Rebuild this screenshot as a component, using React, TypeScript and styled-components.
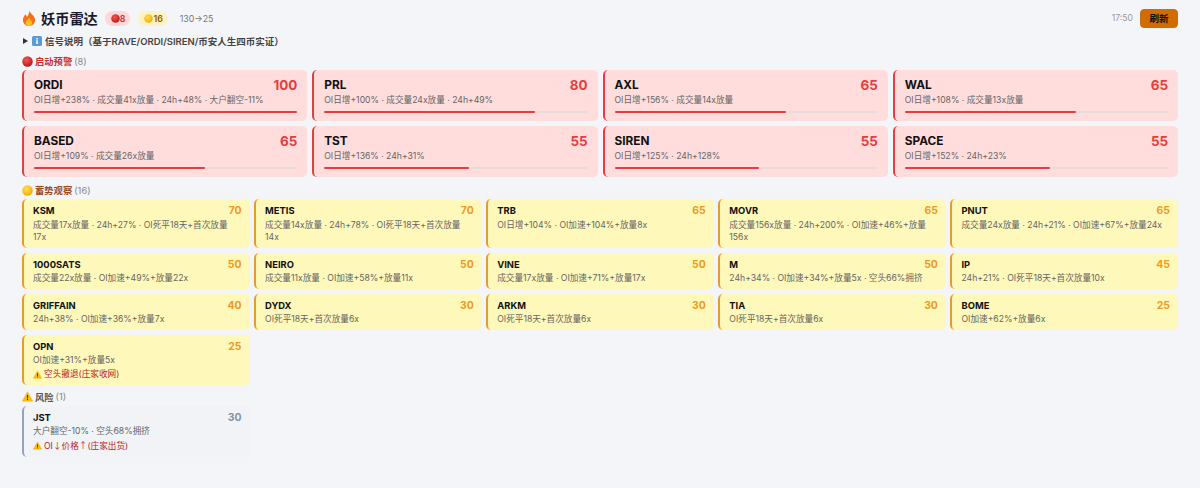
import styled, { createGlobalStyle } from "styled-components";

const GlobalStyle = createGlobalStyle`
  html, body {
    margin: 0;
    padding: 0;
    background: #f3f5f9;
    font-family: Inter, "Noto Sans CJK SC", sans-serif;
  }
  * { box-sizing: border-box; }
`;

const Page = styled.div`
  padding: 8px 22px 0;
  width: 1200px;
  height: 488px;
  overflow: hidden;
`;

const Header = styled.header`
  display: flex;
  align-items: center;
  justify-content: space-between;
  height: 20px;
`;

const HeaderSide = styled.div`
  display: flex;
  align-items: center;
`;

const Title = styled.h1`
  display: flex;
  align-items: center;
  gap: 5px;
  margin: 0 7px 0 0;
  font-size: 14.2px;
  font-weight: 700;
  color: #1a1a2e;
`;

const CountBadge = styled.span<{ $bg: string; $color: string }>`
  display: inline-flex;
  align-items: center;
  height: 15px;
  padding: 0 5px 0 6px;
  margin-right: 8px;
  border-radius: 8px;
  background: ${(p) => p.$bg};
  color: ${(p) => p.$color};
  font-size: 8.8px;
  font-weight: 600;
`;

const Flow = styled.span`
  margin-left: 4px;
  font-size: 8.8px;
  color: #777;
`;

const Clock = styled.span`
  margin-right: 7px;
  font-size: 8.6px;
  color: #999;
`;

const RefreshButton = styled.button`
  width: 38px;
  height: 19px;
  padding: 0;
  border: 1px solid #c9710f;
  border-radius: 4px;
  background: #d06c00;
  color: #111;
  font-family: inherit;
  font-size: 9.5px;
  font-weight: 600;
`;

const Explain = styled.div`
  display: flex;
  align-items: center;
  gap: 3px;
  margin-top: 5px;
  height: 16px;
  font-size: 9.5px;
  font-weight: 600;
  color: #444;
`;

const Arrow = styled.span`
  width: 0;
  height: 0;
  margin: 0 1px;
  border-left: 5px solid #333;
  border-top: 3px solid transparent;
  border-bottom: 3px solid transparent;
`;

const SectionLabel = styled.div<{ $color: string; $top: number }>`
  display: flex;
  align-items: center;
  gap: 2px;
  height: 12px;
  margin-top: ${(p) => p.$top}px;
  margin-bottom: 3px;
  font-size: 9.3px;
  font-weight: 600;
  color: ${(p) => p.$color};

  small {
    font-size: 9.3px;
    font-weight: 400;
    color: #888;
  }
`;

const Grid = styled.div<{ $cols: number; $rowGap: number; $colGap: number }>`
  display: grid;
  grid-template-columns: repeat(${(p) => p.$cols}, 1fr);
  gap: ${(p) => p.$rowGap}px ${(p) => p.$colGap}px;
`;

const BigCard = styled.div`
  height: 51px;
  padding: 8px 10px 0 10px;
  border-left: 2px solid #e53e3e;
  border-radius: 5px;
  background: #ffdddd;
`;

const SmallCard = styled.div<{ $risk?: boolean }>`
  padding: 6px 8px 4px 9px;
  border-left: 2px solid ${(p) => (p.$risk ? "#94a3b8" : "#ed9a1e")};
  border-radius: 5px;
  background: ${(p) => (p.$risk ? "#f1f3f6" : "#fff8bb")};
`;

const CardTop = styled.div`
  display: flex;
  justify-content: space-between;
  align-items: center;
`;

const BigName = styled.span`
  font-size: 11.8px;
  font-weight: 700;
  line-height: 14px;
  color: #111;
`;

const BigScore = styled.span`
  font-size: 13.4px;
  font-weight: 700;
  line-height: 14px;
  color: #e53e3e;
`;

const SmallName = styled.span`
  font-size: 9.4px;
  font-weight: 700;
  line-height: 12px;
  color: #111;
`;

const SmallScore = styled.span<{ $risk?: boolean }>`
  font-size: 10.4px;
  font-weight: 700;
  line-height: 12px;
  color: ${(p) => (p.$risk ? "#8492a6" : "#ed9a1e")};
`;

const Detail = styled.div<{ $big?: boolean }>`
  margin-top: ${(p) => (p.$big ? 1 : 1.5)}px;
  padding-right: 2px;
  font-size: 8.65px;
  line-height: ${(p) => (p.$big ? 14 : 12.5)}px;
  color: #666;
`;

const Warn = styled.div`
  display: flex;
  align-items: center;
  gap: 2px;
  margin-top: 1.5px;
  font-size: 8.65px;
  line-height: 12.5px;
  color: #b91c1c;
`;

const WideArrow = styled.span`
  font-family: "Noto Sans CJK SC", sans-serif;
`;

const Track = styled.div`
  height: 2px;
  margin-top: 4px;
  border-radius: 1px;
  background: #e6dcdc;
`;

const Fill = styled.div`
  height: 100%;
  border-radius: 1px;
  background: #e53e3e;
`;

function Dot({ color, shade, size = 10 }: { color: string; shade: string; size?: number }) {
  const id = `dot${color.slice(1)}`;
  return (
    <svg width={size} height={size} viewBox="0 0 20 20" style={{ flexShrink: 0 }}>
      <defs>
        <radialGradient id={id} cx="40%" cy="35%" r="70%">
          <stop offset="0%" stopColor={color} />
          <stop offset="100%" stopColor={shade} />
        </radialGradient>
      </defs>
      <circle cx="10" cy="10" r="9.5" fill={`url(#${id})`} />
    </svg>
  );
}

const RedDot = (p: { size?: number }) => <Dot color="#f25a4f" shade="#b5141c" {...p} />;
const YellowDot = (p: { size?: number }) => <Dot color="#ffe14d" shade="#f2a900" {...p} />;

function WarnIcon({ size = 9 }: { size?: number }) {
  return (
    <svg width={size} height={size} viewBox="0 0 20 20" style={{ flexShrink: 0 }}>
      <path d="M10 1.5 19.5 18.5H.5Z" fill="#f9b91a" stroke="#f9b91a" strokeLinejoin="round" />
      <rect x="9" y="7" width="2" height="6.5" fill="#3b3b3b" />
      <rect x="9" y="14.5" width="2" height="2" fill="#3b3b3b" />
    </svg>
  );
}

function Fire() {
  return (
    <svg width="14" height="16" viewBox="0 0 26 30">
      <path d="M13 0c1 6 9 9 11 16 2 8-4 14-11 14S0 24 2 16c1-4 3-5 4-8 2 2 3 3 3 5 3-3 5-8 4-13Z" fill="#f4701d" />
      <path d="M13 14c1 3 6 6 6 10 0 3-3 6-6 6s-6-3-6-6c0-4 5-6 6-10Z" fill="#fcc21b" />
    </svg>
  );
}

function InfoIcon() {
  return (
    <svg width="10" height="10" viewBox="0 0 20 20">
      <rect width="20" height="20" rx="3" fill="#5b9bd5" />
      <rect x="8.5" y="4" width="3" height="3" fill="#fff" />
      <rect x="8.5" y="8.5" width="3" height="7.5" fill="#fff" />
    </svg>
  );
}

const startCards = [
  ["ORDI", 100, "OI日增+238% · 成交量41x放量 · 24h+48% · 大户翻空-11%"],
  ["PRL", 80, "OI日增+100% · 成交量24x放量 · 24h+49%"],
  ["AXL", 65, "OI日增+156% · 成交量14x放量"],
  ["WAL", 65, "OI日增+108% · 成交量13x放量"],
  ["BASED", 65, "OI日增+109% · 成交量26x放量"],
  ["TST", 55, "OI日增+136% · 24h+31%"],
  ["SIREN", 55, "OI日增+125% · 24h+128%"],
  ["SPACE", 55, "OI日增+152% · 24h+23%"],
] as const;

const watchCards: [string, number, string, string?][] = [
  ["KSM", 70, "成交量17x放量 · 24h+27% · OI死平18天+首次放量17x"],
  ["METIS", 70, "成交量14x放量 · 24h+78% · OI死平18天+首次放量14x"],
  ["TRB", 65, "OI日增+104% · OI加速+104%+放量8x"],
  ["MOVR", 65, "成交量156x放量 · 24h+200% · OI加速+46%+放量156x"],
  ["PNUT", 65, "成交量24x放量 · 24h+21% · OI加速+67%+放量24x"],
  ["1000SATS", 50, "成交量22x放量 · OI加速+49%+放量22x"],
  ["NEIRO", 50, "成交量11x放量 · OI加速+58%+放量11x"],
  ["VINE", 50, "成交量17x放量 · OI加速+71%+放量17x"],
  ["M", 50, "24h+34% · OI加速+34%+放量5x · 空头66%拥挤"],
  ["IP", 45, "24h+21% · OI死平18天+首次放量10x"],
  ["GRIFFAIN", 40, "24h+38% · OI加速+36%+放量7x"],
  ["DYDX", 30, "OI死平18天+首次放量6x"],
  ["ARKM", 30, "OI死平18天+首次放量6x"],
  ["TIA", 30, "OI死平18天+首次放量6x"],
  ["BOME", 25, "OI加速+62%+放量6x"],
  ["OPN", 25, "OI加速+31%+放量5x", "空头撤退(庄家收网)"],
];

export default function App() {
  return (
    <>
      <GlobalStyle />
      <Page>
        <Header>
          <HeaderSide>
            <Title>
              <Fire />
              妖币雷达
            </Title>
            <CountBadge $bg="#fed7d7" $color="#c53030">
              <RedDot size={9} />8
            </CountBadge>
            <CountBadge $bg="#fef3c0" $color="#8a5a00">
              <YellowDot size={9} />16
            </CountBadge>
            <Flow>130→25</Flow>
          </HeaderSide>
          <HeaderSide>
            <Clock>17:50</Clock>
            <RefreshButton>刷新</RefreshButton>
          </HeaderSide>
        </Header>

        <Explain>
          <Arrow />
          <InfoIcon />
          信号说明（基于RAVE/ORDI/SIREN/币安人生四币实证）
        </Explain>

        <SectionLabel $color="#c53030" $top={6}>
          <RedDot size={11} />
          启动预警 <small>(8)</small>
        </SectionLabel>
        <Grid $cols={4} $rowGap={5} $colGap={5}>
          {startCards.map(([name, score, text]) => (
            <BigCard key={name}>
              <CardTop>
                <BigName>{name}</BigName>
                <BigScore>{score}</BigScore>
              </CardTop>
              <Detail $big>{text}</Detail>
              <Track>
                <Fill style={{ width: `${score}%` }} />
              </Track>
            </BigCard>
          ))}
        </Grid>

        <SectionLabel $color="#9c4a1a" $top={7}>
          <YellowDot size={11} />
          蓄势观察 <small>(16)</small>
        </SectionLabel>
        <Grid $cols={5} $rowGap={5} $colGap={4.6}>
          {watchCards.map(([name, score, text, warn]) => (
            <SmallCard key={name}>
              <CardTop>
                <SmallName>{name}</SmallName>
                <SmallScore>{score}</SmallScore>
              </CardTop>
              <Detail>{text}</Detail>
              {warn && (
                <Warn>
                  <WarnIcon />
                  {warn}
                </Warn>
              )}
            </SmallCard>
          ))}
        </Grid>

        <SectionLabel $color="#555" $top={6}>
          <WarnIcon size={11} />
          风险 <small>(1)</small>
        </SectionLabel>
        <Grid $cols={5} $rowGap={5} $colGap={4.6}>
          <SmallCard $risk>
            <CardTop>
              <SmallName>JST</SmallName>
              <SmallScore $risk>30</SmallScore>
            </CardTop>
            <Detail>大户翻空-10% · 空头68%拥挤</Detail>
            <Warn>
              <WarnIcon />
              <span>
                OI<WideArrow>↓</WideArrow>价格<WideArrow>↑</WideArrow>(庄家出货)
              </span>
            </Warn>
          </SmallCard>
        </Grid>
      </Page>
    </>
  );
}
